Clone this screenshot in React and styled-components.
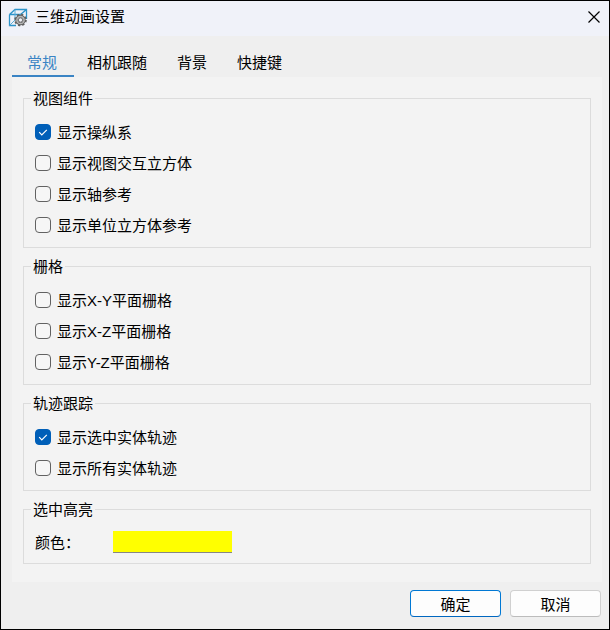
import React, { useState } from "react";
import styled, { createGlobalStyle } from "styled-components";

const GlobalStyle = createGlobalStyle`
  * {
    box-sizing: border-box;
  }

  body {
    margin: 0;
    background-color: #efefef;
    color: black;
    font-family: "Noto Sans", "Noto Sans CJK SC", sans-serif;
    font-size: 15px;
    line-height: 20px;
  }

  button,
  input {
    margin: 0;
    font: inherit;
    color: inherit;
  }
`;

const Dialog = styled.div`
  display: flex;
  flex-direction: column;
  min-height: 100vh;
  border: 1px solid black;
  background-color: #efefef;
`;

const TitleBar = styled.header`
  display: flex;
  align-items: center;
  height: 35px;
  padding: 0 9px 3px 7px;
  background-color: #f0f2f9;
`;

const Title = styled.h1`
  flex: 1;
  margin: 0 0 0 7px;
  font-family: "Liberation Sans", "Noto Sans CJK SC", sans-serif;
  font-size: 15px;
  font-weight: 400;
`;

const CloseButton = styled.button`
  display: flex;
  padding: 0;
  border: none;
  background: none;
`;

const TabList = styled.div`
  display: flex;
  padding: 12px 11px 0;
`;

const Tab = styled.button`
  height: 29px;
  margin-right: -2px;
  padding: 0 17px 0 15px;
  border: none;
  border-bottom: 2px solid ${(props) => (props.$active ? "#3a84c4" : "transparent")};
  background: none;
  color: ${(props) => (props.$active ? "#3a84c4" : "black")};
`;

const Panel = styled.main`
  display: flex;
  flex-direction: column;
  gap: 8px;
  margin: 0 7px 0 11px;
  padding: 11px 11px 18px;
  background-color: #f3f3f3;
`;

const Group = styled.fieldset`
  min-width: 0;
  margin: 0;
  padding: ${(props) => (props.$compact ? "7px 11px 6px" : "8px 11px 7px")};
  border: 1px solid #dcdcdc;
`;

const GroupTitle = styled.legend`
  margin-left: -4px;
  padding: 0 2px;
`;

const Row = styled.div`
  display: flex;
  align-items: center;
  height: 31px;
`;

const CheckLabel = styled.label`
  display: flex;
  align-items: center;
  gap: 6px;
`;

const CheckText = styled.span`
  font-family: "Liberation Sans", "Noto Sans CJK SC", sans-serif;
  line-height: 1;
`;

const CheckBox = styled.span`
  display: grid;
  width: 16px;
  height: 16px;

  > * {
    grid-area: 1 / 1;
  }

  svg {
    pointer-events: none;
  }
`;

const CheckInput = styled.input`
  appearance: none;
  width: 16px;
  height: 16px;
  border: 1px solid #626262;
  border-radius: 4px;
  background-color: #f6f6f6;

  &:checked {
    border-color: #005fb8;
    background-color: #005fb8;
  }
`;

const ColorLabel = styled.label`
  width: 78px;
`;

const ColorInput = styled.input`
  appearance: none;
  width: 119px;
  height: 22px;
  padding: 0;
  border: none;
  border-bottom: 1px solid #868686;
  background: none;

  &::-webkit-color-swatch-wrapper {
    padding: 0;
  }

  &::-webkit-color-swatch {
    border: none;
  }
`;

const Footer = styled.footer`
  display: flex;
  justify-content: flex-end;
  gap: 9px;
  padding: 8px 8px 12px;
`;

const Button = styled.button`
  width: 91px;
  height: 27px;
  padding: 0;
  border: 1px solid ${(props) => (props.$primary ? "#0078d4" : "#d0d0d0")};
  border-bottom-color: ${(props) => (props.$primary ? "#0067c0" : "#bcbcbc")};
  border-radius: 4px;
  background-color: #fdfdfd;
`;

const CubeIcon = () => (
  <svg width="20" height="20" viewBox="0 0 20 20" fill="none" aria-hidden="true">
    <path
      d="M1.5 7.5 7 2.5H18.5V12M1.5 7.5H12.5L18.5 2.5M1.5 7.5V18.5H8M12.5 7.5V9"
      stroke="#2b93c9"
      strokeWidth="1.3"
    />
    <path d="M7 2.5V13M1.5 18.5 12.5 7.5" stroke="#58abd5" />
    <circle cx="12.5" cy="13" r="5.4" stroke="#5f5f5f" strokeWidth="1.8" strokeDasharray="2.2 2.04" />
    <circle cx="12.5" cy="13" r="3.8" fill="#f0f2f9" stroke="#606060" strokeWidth="2.8" />
    <circle cx="12.5" cy="13" r="3.6" stroke="#b8b8b8" strokeWidth="1.5" />
    <circle cx="12.5" cy="13" r="2.1" fill="#f0f2f9" stroke="#5a5a5a" strokeWidth="0.8" />
  </svg>
);

const CloseIcon = () => (
  <svg width="12" height="12" viewBox="0 0 12 12" fill="none" aria-hidden="true">
    <path d="M0.5 0.5 11.5 11.5M11.5 0.5 0.5 11.5" stroke="black" strokeWidth="1.2" />
  </svg>
);

const CheckIcon = () => (
  <svg width="16" height="16" viewBox="0 0 16 16" fill="none" aria-hidden="true">
    <path d="M4.2 8.2 6.8 10.8 11.8 5.8" stroke="white" strokeWidth="1.2" />
  </svg>
);

const tabs = ["常规", "相机跟随", "背景", "快捷键"];

const groups = [
  {
    title: "视图组件",
    options: ["显示操纵系", "显示视图交互立方体", "显示轴参考", "显示单位立方体参考"],
  },
  {
    title: "栅格",
    options: ["显示X-Y平面栅格", "显示X-Z平面栅格", "显示Y-Z平面栅格"],
  },
  {
    title: "轨迹跟踪",
    options: ["显示选中实体轨迹", "显示所有实体轨迹"],
  },
];

const Option = ({ label, checked, onChange }) => (
  <Row>
    <CheckLabel>
      <CheckBox>
        <CheckInput type="checkbox" checked={checked} onChange={onChange} />
        {checked && <CheckIcon />}
      </CheckBox>
      <span>
        <CheckText>{label}</CheckText>
      </span>
    </CheckLabel>
  </Row>
);

const App = () => {
  const [activeTab, setActiveTab] = useState("常规");
  const [color, setColor] = useState("#ffff00");
  const [selected, setSelected] = useState(["显示操纵系", "显示选中实体轨迹"]);

  const toggle = (label) =>
    setSelected((prev) =>
      prev.includes(label) ? prev.filter((item) => item !== label) : [...prev, label]
    );

  return (
    <>
      <GlobalStyle />
      <Dialog role="dialog" aria-labelledby="dialog-title">
        <TitleBar>
          <CubeIcon />
          <Title id="dialog-title">三维动画设置</Title>
          <CloseButton type="button" aria-label="关闭">
            <CloseIcon />
          </CloseButton>
        </TitleBar>

        <TabList role="tablist">
          {tabs.map((tab) => (
            <Tab
              key={tab}
              type="button"
              role="tab"
              aria-selected={tab === activeTab}
              $active={tab === activeTab}
              onClick={() => setActiveTab(tab)}
            >
              {tab}
            </Tab>
          ))}
        </TabList>

        <Panel>
          {groups.map((group) => (
            <Group key={group.title}>
              <GroupTitle>{group.title}</GroupTitle>
              {group.options.map((label) => (
                <Option
                  key={label}
                  label={label}
                  checked={selected.includes(label)}
                  onChange={() => toggle(label)}
                />
              ))}
            </Group>
          ))}

          <Group $compact>
            <GroupTitle>选中高亮</GroupTitle>
            <Row>
              <ColorLabel htmlFor="highlight-color">颜色：</ColorLabel>
              <ColorInput
                id="highlight-color"
                type="color"
                value={color}
                onChange={(e) => setColor(e.target.value)}
              />
            </Row>
          </Group>
        </Panel>

        <Footer>
          <Button type="button" $primary>
            确定
          </Button>
          <Button type="button">取消</Button>
        </Footer>
      </Dialog>
    </>
  );
};

export default App;
